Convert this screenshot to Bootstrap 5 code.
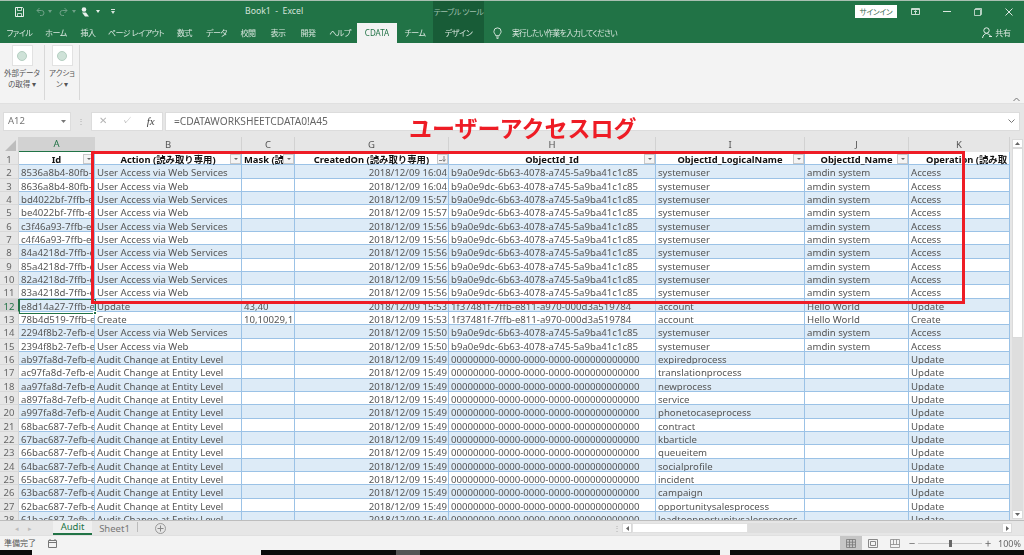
<!DOCTYPE html>
<html lang="ja">
<head>
<meta charset="utf-8">
<title>Book1 - Excel</title>
<link href="https://cdn.jsdelivr.net/npm/bootstrap@5.3.0/dist/css/bootstrap.min.css" rel="stylesheet">
<style>
html,body{height:555px;overflow:hidden;margin:0}
body{font-family:"Noto Sans CJK JP","Liberation Sans",sans-serif;background:#e6e6e6;color:#444;font-size:10px;line-height:1;font-feature-settings:"palt"}
.xl-app{position:relative;width:1024px;height:555px;display:flex;flex-direction:column;filter:blur(.35px)}
.xl-title{height:22px;flex:none;background:#217346;border-top:1px solid #a9bfb2;color:#cfe0d6;display:grid;grid-template-columns:433px 51px 1fr;}
.xl-qat{display:flex;align-items:center;gap:3px;padding-left:15px;position:relative}
.xl-m2{margin-left:2px}
.xl-doc{position:absolute;left:245px;top:6px;font-family:"Noto Sans",sans-serif;font-size:8.7px;color:#d5e3db;white-space:pre}
.xl-tooltab{background:#185c37;font-size:8px;letter-spacing:-.5px;color:#9dbfac;text-align:center;padding-top:7px;white-space:nowrap}
.xl-winbar{display:flex;align-items:center;justify-content:flex-end}
.xl-sign{background:#fff;color:#35694c;font-size:7.5px;letter-spacing:-.2px;width:42px;height:13px;display:flex;align-items:center;justify-content:center;margin-right:3px}
.xl-winbtn{width:31px;display:flex;justify-content:center}
.xl-tabs{height:21px;flex:none;background:#217346;color:#d8e6de;display:grid;grid-template-columns:39px 34px 30px 66px 31px 33px 30px 30px 30px 34px 40px 36px 51px 1fr;font-size:8px;letter-spacing:-.45px}
.xl-tab{display:flex;align-items:center;justify-content:center;white-space:nowrap}
.xl-tab-on{background:#f3f3f3;color:#217346;height:20px;margin-top:1px;letter-spacing:0;font-family:"Noto Sans",sans-serif}
.xl-tab-dark{background:#185c37}
.xl-tell{display:flex;align-items:center;padding-left:9px;gap:10px;white-space:nowrap;position:relative;color:#d8e6de}
.xl-tell-txt{font-size:7.7px;letter-spacing:-.6px}
.xl-share{position:absolute;right:13px;top:5px;display:flex;gap:3px;align-items:center;letter-spacing:-.1px}
.xl-ribbon{height:61px;flex:none;background:#f3f3f3;display:flex;position:relative;border-bottom:1px solid #e0e0e0}
.xl-group{width:45px;border-right:1px solid #d8d8d8;margin:2px 0 3px;display:flex;flex-direction:column;align-items:center;color:#555;font-size:7.5px;line-height:10.5px;text-align:center;white-space:nowrap}
.xl-group+.xl-group{width:35px}
.xl-rbtn{width:21px;height:21px;background:#fff;border:1px solid #e2e2e2;display:flex;align-items:center;justify-content:center;margin-bottom:2px}
.xl-dot{width:10px;height:10px;border-radius:50%;background:#cfe2d8;border:1px solid #b4cfc1}
.xl-collapse{position:absolute;right:4px;bottom:1px;color:#777}
.xl-fbar{height:33px;flex:none;display:flex;align-items:center;padding:1px 4px 0 3px}
.xl-name{width:68px;height:19px;background:#fff;border:1px solid #dcdcdc;display:flex;align-items:center;justify-content:space-between;padding:0 4px;font-family:"Noto Sans",sans-serif;font-size:9.5px;color:#777}
.xl-fdots{width:20px;text-align:center;color:#aaa;font-size:8px}
.xl-fbtns{width:72px;height:19px;background:#fff;border:1px solid #dcdcdc;display:flex;align-items:center;justify-content:space-around;color:#b5b5b5;font-family:"Liberation Serif",serif;font-size:10px;margin-right:2px}
.xl-fx{color:#444;font-style:italic;font-size:11px}
.xl-finput{flex:1;height:19px;background:#fff;border:1px solid #dcdcdc;display:flex;align-items:center;justify-content:space-between;padding:0 4px 0 8px;font-family:"Noto Sans",sans-serif;font-size:10.2px;color:#666}
.xl-grid-wrap{flex:none;height:383px;overflow:hidden;display:flex;position:relative}
table.xl-sheet{table-layout:fixed;width:1010px;flex:none;border-collapse:separate;border-spacing:0;font-family:"Noto Sans","Noto Sans CJK JP",sans-serif;font-size:9.65px;color:#555;font-feature-settings:normal}
.xl-sheet th,.xl-sheet td{padding:3px 0 0 2px;height:13.33px;line-height:9.33px;white-space:nowrap;overflow:hidden;font-weight:400}
.xl-sheet thead th{height:15px;line-height:15px;background:#e6e6e6;color:#555;text-align:center;padding:0;border-right:1px solid #d2d2d2;font-family:"Noto Sans",sans-serif;font-size:9.5px}
.xl-sheet thead th.xl-sel{background:#d2d2d2;color:#217346;line-height:14px;border-bottom:1px solid #217346}
.xl-sheet thead th.xl-corner{background:#e6e6e6;position:relative}
.xl-corner svg{position:absolute;right:2px;bottom:1px}
.xl-sheet tbody th{background:#e6e6e6;text-align:center;padding:3px 0 0;color:#666;font-size:9.5px;font-family:"Noto Sans",sans-serif;border-right:1px solid #d2d2d2;border-bottom:1px solid #d8d8d8}
.xl-sheet tbody th.xl-sel{background:#d2d2d2;color:#217346;border-right-color:#217346}
.xl-sheet td{border-right:1px solid #9bc2e6;border-bottom:1px solid #9bc2e6;background:#fff}
.xl-sheet tbody tr:nth-child(even) td{background:#ddebf7}
.xl-sheet tbody tr.xl-head td{background:#fff;color:#111;font-weight:700;text-align:center;position:relative;padding:3px 0 0;font-size:9.4px;overflow:visible}
.xl-sheet tbody tr.xl-head td.xl-left{text-align:left;padding-left:2px}
.xl-sheet tbody tr.xl-head td.xl-oper{text-align:left;padding-left:17px}
.xl-sheet td.xl-r{text-align:right;padding-right:1px}
.xl-flt{position:absolute;right:0;top:2px;width:11px;height:10px;background:#f4f4f4;border:1px solid #c8c8c8;display:flex;align-items:center;justify-content:center}
.xl-flt-arrow::after{content:"";border:2px solid transparent;border-top:2px solid #666;margin-top:2px}
.xl-vbar{flex:1;display:flex;flex-direction:column;padding:2px 1px 1px 2px;background:#e6e6e6}
.xl-vthumb{height:190px;flex:none;background:#fff;border:1px solid #dadada}
.xl-vtrack{flex:1;background:#dedede}
.xl-varrow{height:9px;flex:none;background:#fff;border:1px solid #dadada;display:flex;align-items:center;justify-content:center}
.xl-sheets{height:15px;flex:none;background:#e6e6e6;display:flex;align-items:stretch;border-top:1px solid #bdbdbd;position:relative}
.xl-snav{width:53px;display:flex;gap:9px;padding-left:15px;align-items:center;color:#bbb;font-size:7px}
.xl-stab{width:39px;background:#f0f0f0;color:#217346;border-bottom:2px solid #217346;text-align:center;font-size:9.5px;line-height:12px;font-family:"Noto Sans",sans-serif}
.xl-stab2{width:46px;color:#777;text-align:center;font-size:9.5px;line-height:13px;font-family:"Noto Sans",sans-serif;border-right:1px solid #bbb;margin:1px 0 3px}
.xl-plus{margin:2px 0 0 17px}
.xl-hbar{position:absolute;left:613px;right:12px;top:2px;height:10px;display:flex;align-items:stretch}
.xl-hdots{width:9px;color:#aaa;font-size:8px;line-height:10px}
.xl-hthumb{width:116px;background:#fff;border:1px solid #e0e0e0}
.xl-htrack{flex:1;background:#dedede}
.xl-harrow{width:10px;background:#fff;border:1px solid #dadada;display:flex;align-items:center;justify-content:center}
.xl-status{height:15px;flex:none;background:#f3f3f3;display:flex;align-items:center;padding-left:4px;position:relative;color:#555;font-size:8px;border-top:1px solid #e0e0e0}
.xl-rec{margin-left:12px}
.xl-views{position:absolute;left:840px;top:0;height:14px;display:flex}
.xl-view{width:22px;height:14px;display:flex;align-items:center;justify-content:center}
.xl-view-on{background:#c6c6c6}
.xl-slider{position:absolute;left:909px;top:0;height:14px;width:82px;display:flex;align-items:center;color:#666;font-size:11px}
.xl-sline{flex:1;height:1px;background:#c8c8c8;margin:0 3px;position:relative}
.xl-sknob{position:absolute;left:31px;top:-3px;width:3px;height:7px;background:#666}
.xl-pct{position:absolute;left:998px;top:3px;font-family:"Noto Sans",sans-serif;font-size:9px;color:#666}
.xl-bottom{flex:1;display:grid;grid-template-columns:32px 229px 135px 24px 300px 10px 1fr}
.xl-blk{background:#0b0b0b}.xl-wht{background:#f2f2f2}.xl-dim{background:#555}
.xl-redbox{position:absolute;left:91px;top:151px;width:874px;height:153px;border:3px solid #ee1c25;pointer-events:none}
.xl-redtitle{position:absolute;left:409px;top:115px;font-size:23px;line-height:24px;font-weight:700;color:#ee1c25;white-space:nowrap;font-feature-settings:normal}
.xl-cursor{position:absolute;left:19px;top:299px;width:77px;height:14.500px;border:1px solid #217346;pointer-events:none}
.xl-cursor::after{content:"";position:absolute;right:-2px;bottom:-2px;width:4px;height:4px;background:#217346;border:1px solid #fff}
</style>
</head>
<body>
<div class="xl-app">
  <div class="xl-title">
    <div class="xl-qat">
      <svg width="9" height="10" viewBox="0 0 9 10"><path d="M.5.5h7l1 1v8h-8z" fill="none" stroke="#e8f0eb"/><path d="M2.500.5h4v3h-4zM2.500 9.500v-3h4v3" fill="none" stroke="#e8f0eb" stroke-width=".8"/></svg>
      <svg class="ms-2" width="10" height="9" viewBox="0 0 10 9"><path d="M2 3.500h4.500a2.500 2.500 0 0 1 0 5H5M2 3.500l2.500-2.500M2 3.500L4.500 6" fill="none" stroke="#6fa187"/></svg>
      <svg width="4" height="3" viewBox="0 0 4 3"><path d="M0 0h4L2 3z" fill="#6fa187"/></svg>
      <svg class="ms-1" width="10" height="9" viewBox="0 0 10 9"><path d="M8 3.500H3.500a2.500 2.500 0 0 0 0 5H5M8 3.500L5.500 1M8 3.500L5.500 6" fill="none" stroke="#6fa187"/></svg>
      <svg width="4" height="3" viewBox="0 0 4 3"><path d="M0 0h4L2 3z" fill="#6fa187"/></svg>
      <svg class="xl-m2" width="8" height="10" viewBox="0 0 8 10"><circle cx="3" cy="2.500" r="2.300" fill="#e8f0eb"/><path d="M1 5.500h4l3 4H4z" fill="#e8f0eb"/></svg>
      <svg class="ms-1" width="4" height="3" viewBox="0 0 4 3"><path d="M0 0h4L2 3z" fill="#e8f0eb"/></svg>
      <svg class="ms-2" width="4" height="5" viewBox="0 0 4 5"><path d="M0 0h4v1H0zM0 2h4L2 5z" fill="#d5e3db"/></svg>
      <span class="xl-doc">Book1  -  Excel</span>
    </div>
    <div class="xl-tooltab">テーブル ツール</div>
    <div class="xl-winbar">
      <div class="xl-sign">サインイン</div>
      <div class="xl-winbtn"><svg width="9" height="7" viewBox="0 0 9 7"><path d="M.5.500h8v6h-8zM.5 1.500h8M4.500 6V3M3 4l1.500-1.500L6 4" fill="none" stroke="#dbe7e0" stroke-width=".9"/></svg></div>
      <div class="xl-winbtn"><svg width="8" height="1" viewBox="0 0 8 1"><path d="M0 .5h8" stroke="#dbe7e0"/></svg></div>
      <div class="xl-winbtn"><svg width="8" height="8" viewBox="0 0 8 8"><path d="M.5 1.500h6v6h-6zM1.500 1.500v-1h6v6h-1" fill="none" stroke="#dbe7e0" stroke-width=".8"/></svg></div>
      <div class="xl-winbtn"><svg width="8" height="8" viewBox="0 0 8 8"><path d="M.5.500l7 7M7.500.5l-7 7" stroke="#dbe7e0"/></svg></div>
    </div>
  </div>
  <div class="xl-tabs">
    <div class="xl-tab">ファイル</div><div class="xl-tab">ホーム</div><div class="xl-tab">挿入</div><div class="xl-tab">ページ レイアウト</div><div class="xl-tab">数式</div><div class="xl-tab">データ</div><div class="xl-tab">校閲</div><div class="xl-tab">表示</div><div class="xl-tab">開発</div><div class="xl-tab">ヘルプ</div>
    <div class="xl-tab xl-tab-on">CDATA</div><div class="xl-tab">チーム</div><div class="xl-tab xl-tab-dark">デザイン</div>
    <div class="xl-tell">
      <svg width="9" height="12" viewBox="0 0 10 13"><path d="M3 9.500C3 8 1 7 1 4.800a4 4 0 0 1 8 0C9 7 7 8 7 9.500zM3.500 11h3M4 12.500h2" fill="none" stroke="#e4eee8"/></svg>
      <span class="xl-tell-txt">実行したい作業を入力してください</span>
      <div class="xl-share"><svg width="10" height="11" viewBox="0 0 10 11"><circle cx="4.500" cy="3.500" r="2.700" fill="none" stroke="#e4eee8"/><path d="M.5 11C1 8 3 6.500 4.500 6.500S8 8 8.500 9M7 9.500h3" fill="none" stroke="#e4eee8"/></svg><span>共有</span></div>
    </div>
  </div>
  <div class="xl-ribbon">
    <div class="xl-group"><div class="xl-rbtn"><div class="xl-dot"></div></div><div>外部データ<br>の取得 ▾</div></div>
    <div class="xl-group"><div class="xl-rbtn"><div class="xl-dot"></div></div><div>アクショ<br>ン ▾</div></div>
    <svg class="xl-collapse" width="7" height="5" viewBox="0 0 7 5"><path d="M.5 4L3.500 1l3 3" fill="none" stroke="#777"/></svg>
  </div>
  <div class="xl-fbar">
    <div class="xl-name"><span>A12</span><svg width="5" height="3" viewBox="0 0 5 3"><path d="M0 0h5L2.500 3z" fill="#777"/></svg></div>
    <div class="xl-fdots">⋮</div>
    <div class="xl-fbtns"><span>✕</span><span>✓</span><span class="xl-fx">fx</span></div>
    <div class="xl-finput"><span>=CDATAWORKSHEETCDATA0!A45</span><svg width="7" height="4" viewBox="0 0 7 4"><path d="M.5.500l3 3 3-3" fill="none" stroke="#777"/></svg></div>
  </div>
  <div class="xl-grid-wrap">
    <table class="xl-sheet">
      <colgroup><col style="width:19px"><col style="width:76px"><col style="width:147px"><col style="width:53px"><col style="width:154px"><col style="width:207px"><col style="width:149px"><col style="width:104px"><col style="width:101px"></colgroup>
      <thead><tr><th class="xl-corner"><svg width="11" height="11" viewBox="0 0 11 11"><path d="M11 0v11H0z" fill="#bdbdbd"/></svg></th><th class="xl-sel">A</th><th>B</th><th>C</th><th>G</th><th>H</th><th>I</th><th>J</th><th>K</th></tr></thead>
      <tbody>
<tr class="xl-head"><th>1</th><td>Id<span class="xl-flt xl-flt-arrow"></span></td><td>Action (読み取り専用)<span class="xl-flt xl-flt-arrow"></span></td><td class="xl-left">Mask (読<span class="xl-flt xl-flt-arrow"></span></td><td>CreatedOn (読み取り専用)<span class="xl-flt"><svg width="7" height="6" viewBox="0 0 7 6"><path d="M0 4.500h3M5 0v5M3.500 3.500L5 5.500l1.500-2" fill="none" stroke="#666" stroke-width=".8"/></svg></span></td><td>ObjectId_Id<span class="xl-flt xl-flt-arrow"></span></td><td>ObjectId_LogicalName<span class="xl-flt xl-flt-arrow"></span></td><td>ObjectId_Name<span class="xl-flt xl-flt-arrow"></span></td><td class="xl-oper">Operation (読み取</td></tr>
<tr><th>2</th><td>8536a8b4-80fb-e<td>User Access via Web Services<td><td class="xl-r">2018/12/09 16:04<td>b9a0e9dc-6b63-4078-a745-5a9ba41c1c85<td>systemuser<td>amdin system<td>Access</tr>
<tr><th>3</th><td>8636a8b4-80fb-e<td>User Access via Web<td><td class="xl-r">2018/12/09 16:04<td>b9a0e9dc-6b63-4078-a745-5a9ba41c1c85<td>systemuser<td>amdin system<td>Access</tr>
<tr><th>4</th><td>bd4022bf-7ffb-e<td>User Access via Web Services<td><td class="xl-r">2018/12/09 15:57<td>b9a0e9dc-6b63-4078-a745-5a9ba41c1c85<td>systemuser<td>amdin system<td>Access</tr>
<tr><th>5</th><td>be4022bf-7ffb-e<td>User Access via Web<td><td class="xl-r">2018/12/09 15:57<td>b9a0e9dc-6b63-4078-a745-5a9ba41c1c85<td>systemuser<td>amdin system<td>Access</tr>
<tr><th>6</th><td>c3f46a93-7ffb-e<td>User Access via Web Services<td><td class="xl-r">2018/12/09 15:56<td>b9a0e9dc-6b63-4078-a745-5a9ba41c1c85<td>systemuser<td>amdin system<td>Access</tr>
<tr><th>7</th><td>c4f46a93-7ffb-e<td>User Access via Web<td><td class="xl-r">2018/12/09 15:56<td>b9a0e9dc-6b63-4078-a745-5a9ba41c1c85<td>systemuser<td>amdin system<td>Access</tr>
<tr><th>8</th><td>84a4218d-7ffb-e<td>User Access via Web Services<td><td class="xl-r">2018/12/09 15:56<td>b9a0e9dc-6b63-4078-a745-5a9ba41c1c85<td>systemuser<td>amdin system<td>Access</tr>
<tr><th>9</th><td>85a4218d-7ffb-e<td>User Access via Web<td><td class="xl-r">2018/12/09 15:56<td>b9a0e9dc-6b63-4078-a745-5a9ba41c1c85<td>systemuser<td>amdin system<td>Access</tr>
<tr><th>10</th><td>82a4218d-7ffb-e<td>User Access via Web Services<td><td class="xl-r">2018/12/09 15:56<td>b9a0e9dc-6b63-4078-a745-5a9ba41c1c85<td>systemuser<td>amdin system<td>Access</tr>
<tr><th>11</th><td>83a4218d-7ffb-e<td>User Access via Web<td><td class="xl-r">2018/12/09 15:56<td>b9a0e9dc-6b63-4078-a745-5a9ba41c1c85<td>systemuser<td>amdin system<td>Access</tr>
<tr><th class="xl-sel">12</th><td>e8d14a27-7ffb-e<td>Update<td>43,40<td class="xl-r">2018/12/09 15:53<td>1f37481f-7ffb-e811-a970-000d3a519784<td>account<td>Hello World<td>Update</tr>
<tr><th>13</th><td>78b4d519-7ffb-e<td>Create<td>10,10029,11<td class="xl-r">2018/12/09 15:53<td>1f37481f-7ffb-e811-a970-000d3a519784<td>account<td>Hello World<td>Create</tr>
<tr><th>14</th><td>2294f8b2-7efb-e<td>User Access via Web Services<td><td class="xl-r">2018/12/09 15:50<td>b9a0e9dc-6b63-4078-a745-5a9ba41c1c85<td>systemuser<td>amdin system<td>Access</tr>
<tr><th>15</th><td>2394f8b2-7efb-e<td>User Access via Web<td><td class="xl-r">2018/12/09 15:50<td>b9a0e9dc-6b63-4078-a745-5a9ba41c1c85<td>systemuser<td>amdin system<td>Access</tr>
<tr><th>16</th><td>ab97fa8d-7efb-e<td>Audit Change at Entity Level<td><td class="xl-r">2018/12/09 15:49<td>00000000-0000-0000-0000-000000000000<td>expiredprocess<td><td>Update</tr>
<tr><th>17</th><td>ac97fa8d-7efb-e<td>Audit Change at Entity Level<td><td class="xl-r">2018/12/09 15:49<td>00000000-0000-0000-0000-000000000000<td>translationprocess<td><td>Update</tr>
<tr><th>18</th><td>aa97fa8d-7efb-e<td>Audit Change at Entity Level<td><td class="xl-r">2018/12/09 15:49<td>00000000-0000-0000-0000-000000000000<td>newprocess<td><td>Update</tr>
<tr><th>19</th><td>a897fa8d-7efb-e<td>Audit Change at Entity Level<td><td class="xl-r">2018/12/09 15:49<td>00000000-0000-0000-0000-000000000000<td>service<td><td>Update</tr>
<tr><th>20</th><td>a997fa8d-7efb-e<td>Audit Change at Entity Level<td><td class="xl-r">2018/12/09 15:49<td>00000000-0000-0000-0000-000000000000<td>phonetocaseprocess<td><td>Update</tr>
<tr><th>21</th><td>68bac687-7efb-e<td>Audit Change at Entity Level<td><td class="xl-r">2018/12/09 15:49<td>00000000-0000-0000-0000-000000000000<td>contract<td><td>Update</tr>
<tr><th>22</th><td>67bac687-7efb-e<td>Audit Change at Entity Level<td><td class="xl-r">2018/12/09 15:49<td>00000000-0000-0000-0000-000000000000<td>kbarticle<td><td>Update</tr>
<tr><th>23</th><td>66bac687-7efb-e<td>Audit Change at Entity Level<td><td class="xl-r">2018/12/09 15:49<td>00000000-0000-0000-0000-000000000000<td>queueitem<td><td>Update</tr>
<tr><th>24</th><td>64bac687-7efb-e<td>Audit Change at Entity Level<td><td class="xl-r">2018/12/09 15:49<td>00000000-0000-0000-0000-000000000000<td>socialprofile<td><td>Update</tr>
<tr><th>25</th><td>65bac687-7efb-e<td>Audit Change at Entity Level<td><td class="xl-r">2018/12/09 15:49<td>00000000-0000-0000-0000-000000000000<td>incident<td><td>Update</tr>
<tr><th>26</th><td>63bac687-7efb-e<td>Audit Change at Entity Level<td><td class="xl-r">2018/12/09 15:49<td>00000000-0000-0000-0000-000000000000<td>campaign<td><td>Update</tr>
<tr><th>27</th><td>62bac687-7efb-e<td>Audit Change at Entity Level<td><td class="xl-r">2018/12/09 15:49<td>00000000-0000-0000-0000-000000000000<td>opportunitysalesprocess<td><td>Update</tr>
<tr><th>28</th><td>61bac687-7efb-e<td>Audit Change at Entity Level<td><td class="xl-r">2018/12/09 15:49<td>00000000-0000-0000-0000-000000000000<td>leadtoopportunitysalesprocess<td><td>Update</tr>
      </tbody>
    </table>
    <div class="xl-vbar"><div class="xl-varrow"><svg width="5" height="3" viewBox="0 0 5 3"><path d="M2.500 0L5 3H0z" fill="#666"/></svg></div><div class="xl-vthumb"></div><div class="xl-vtrack"></div><div class="xl-varrow"><svg width="5" height="3" viewBox="0 0 5 3"><path d="M0 0h5L2.500 3z" fill="#666"/></svg></div></div>
  </div>
  <div class="xl-sheets">
    <div class="xl-snav"><span>◂</span><span>▸</span></div>
    <div class="xl-stab">Audit</div>
    <div class="xl-stab2">Sheet1</div>
    <svg class="xl-plus" width="11" height="11" viewBox="0 0 11 11"><circle cx="5.500" cy="5.500" r="5" fill="none" stroke="#999"/><path d="M5.500 2.500v6M2.500 5.500h6" stroke="#888"/></svg>
    <div class="xl-hbar"><div class="xl-hdots">⋮</div><div class="xl-harrow"><svg width="3" height="5" viewBox="0 0 3 5"><path d="M3 0L0 2.500 3 5z" fill="#666"/></svg></div><div class="xl-hthumb"></div><div class="xl-htrack"></div><div class="xl-harrow"><svg width="3" height="5" viewBox="0 0 3 5"><path d="M0 0l3 2.500L0 5z" fill="#666"/></svg></div></div>
  </div>
  <div class="xl-status">
    <span>準備完了</span>
    <svg class="xl-rec" width="9" height="9" viewBox="0 0 9 9"><path d="M.5 1.500h8v7h-8zM.5 3.500h8" fill="none" stroke="#777"/><path d="M2 0v2M7 0v2" stroke="#777"/></svg>
    <div class="xl-views">
      <div class="xl-view xl-view-on"><svg width="10" height="9" viewBox="0 0 10 9"><path d="M.5.500h9v8h-9zM3.500.5v8M6.500.5v8M.5 3.200h9M.5 5.800h9" fill="none" stroke="#777" stroke-width=".8"/></svg></div>
      <div class="xl-view"><svg width="10" height="9" viewBox="0 0 10 9"><path d="M.5.500h9v8h-9zM2.500 2.500h5v4h-5z" fill="none" stroke="#888"/></svg></div>
      <div class="xl-view"><svg width="10" height="9" viewBox="0 0 10 9"><path d="M.5.500h9v8h-9zM.5 5.500h9M3.500.5v5M6.500.5v5" fill="none" stroke="#888" stroke-width=".8"/></svg></div>
    </div>
    <div class="xl-slider"><span>−</span><div class="xl-sline"><div class="xl-sknob"></div></div><span>+</span></div>
    <span class="xl-pct">100%</span>
  </div>
  <div class="xl-bottom"><div class="xl-blk"></div><div class="xl-wht"></div><div class="xl-blk"></div><div class="xl-dim"></div><div class="xl-blk"></div><div class="xl-wht"></div><div class="xl-blk"></div></div>
  <div class="xl-cursor"></div>
  <div class="xl-redbox"></div>
  <div class="xl-redtitle">ユーザーアクセスログ</div>
</div>
<script src="https://cdn.jsdelivr.net/npm/bootstrap@5.3.0/dist/js/bootstrap.bundle.min.js"></script>
</body>
</html>
